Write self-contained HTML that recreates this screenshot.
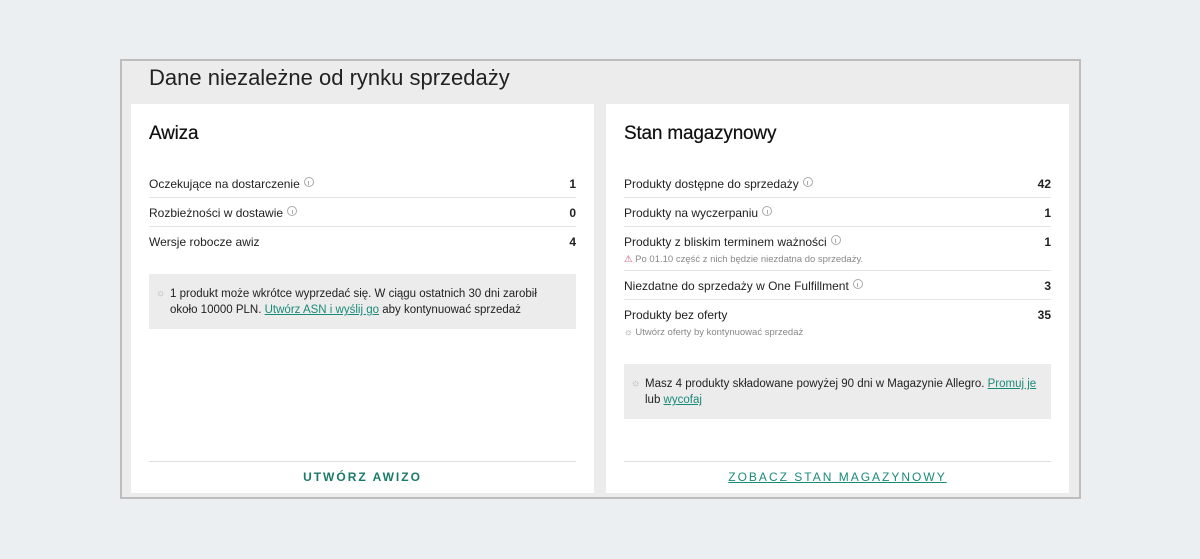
<!DOCTYPE html>
<html><head><meta charset="utf-8"><style>
*{box-sizing:border-box;margin:0;padding:0}
body{width:1200px;height:559px;background:#eceff2;font-family:"Liberation Sans",sans-serif;color:#222;position:relative;overflow:hidden}
.outer{position:absolute;left:120px;top:59px;width:961px;height:440px;background:#ececec;border:2px solid #bdbdbd}
.title{position:absolute;left:27px;top:4px;font-size:22px;color:#222}
.card{position:absolute;top:43px;width:463px;height:389px;background:#fff}
.card h2{position:absolute;left:18px;top:19px;font-size:19px;font-weight:normal;color:#111;letter-spacing:-.2px;text-shadow:0 0 .4px #111}
.rows{position:absolute;left:18px;right:18px;top:65px}
.row{position:relative;border-bottom:1px solid #e4e4e4;font-size:12px;padding-top:8px;height:29px}
.row.last{border-bottom:none}
.row .v{position:absolute;right:0;top:8px;font-weight:bold}
.i{display:inline-block;width:10px;height:10px;border:1px solid #aaa;border-radius:50%;margin-left:4px;vertical-align:1px;position:relative}
.i:after{content:"";position:absolute;left:3.5px;top:2.5px;width:1px;height:4px;background:#aaa}
.sub{font-size:9.5px;color:#888;margin-top:7px}
.callout{position:absolute;left:18px;right:18px;background:#ececec;font-size:11.5px;line-height:16px;padding:12px 12px 12px 21px}
.callout .b{position:absolute;left:7px;top:12px;color:#aaa;font-size:10px}
a{color:#1a8a78;text-decoration:underline}
.foot{position:absolute;left:18px;right:18px;top:357px;border-top:1px solid #ddd;text-align:center;padding-top:8px;font-size:12px;letter-spacing:2px;color:#1a7a68}
</style></head><body>
<div class="outer">
<div class="title">Dane niezależne od rynku sprzedaży</div>
<div class="card" style="left:9px">
<h2>Awiza</h2>
<div class="rows">
<div class="row">Oczekujące na dostarczenie<span class="i"></span><span class="v">1</span></div>
<div class="row">Rozbieżności w dostawie<span class="i"></span><span class="v">0</span></div>
<div class="row last">Wersje robocze awiz<span class="v">4</span></div>
</div>
<div class="callout" style="top:170px;height:55px;padding-top:12px"><span class="b">☼</span>1 produkt może wkrótce wyprzedać się. W ciągu ostatnich 30 dni zarobił około 10000 PLN. <a>Utwórz ASN i wyślij go</a> aby kontynuować sprzedaż</div>
<div class="foot" style="font-weight:bold">UTWÓRZ AWIZO</div>
</div>
<div class="card" style="left:484px">
<h2>Stan magazynowy</h2>
<div class="rows">
<div class="row">Produkty dostępne do sprzedaży<span class="i"></span><span class="v">42</span></div>
<div class="row">Produkty na wyczerpaniu<span class="i"></span><span class="v">1</span></div>
<div class="row" style="height:44px">Produkty z bliskim terminem ważności<span class="i"></span><span class="v">1</span><div class="sub" style="margin-top:5px"><span style="color:#e0556a">⚠</span> Po 01.10 część z nich będzie niezdatna do sprzedaży.</div></div>
<div class="row">Niezdatne do sprzedaży w One Fulfillment<span class="i"></span><span class="v">3</span></div>
<div class="row last">Produkty bez oferty<span class="v">35</span><div class="sub" style="margin-top:5px">☼ Utwórz oferty by kontynuować sprzedaż</div></div>
</div>
<div class="callout" style="top:260px;height:55px"><span class="b">☼</span>Masz 4 produkty składowane powyżej 90 dni w Magazynie Allegro. <a>Promuj je</a> lub <a>wycofaj</a></div>
<div class="foot"><a style="color:#1a8a78">ZOBACZ STAN MAGAZYNOWY</a></div>
</div>
</div>
</body></html>
